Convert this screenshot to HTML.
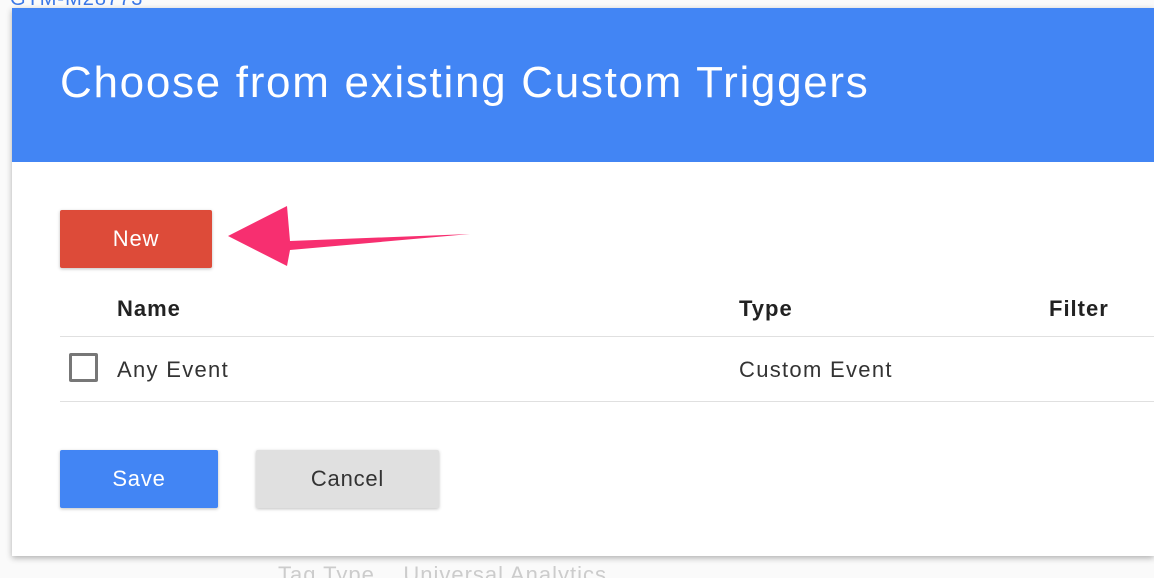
<!DOCTYPE html>
<html><head><style>
html,body{margin:0;width:1154px;height:578px;overflow:hidden}
body{background:#fafafa;font-family:"Liberation Sans",sans-serif;position:relative}
.top{position:absolute;left:10px;top:-12px;color:#3b78e7;font-size:20px;letter-spacing:1px}
.dlg{position:absolute;left:12px;top:8px;width:1142px;height:548px;background:#fff;box-shadow:0 2px 6px rgba(0,0,0,.3)}
.hdr{height:154px;background:#4285f4;color:#fff;font-size:44px;letter-spacing:1.7px;line-height:150px;padding-left:48px}
.btn{position:absolute;border-radius:2px;font-size:22px;letter-spacing:.8px;text-align:center;box-shadow:0 1px 3px rgba(0,0,0,.25)}
.th{position:absolute;font-weight:bold;font-size:22px;color:#222;letter-spacing:1px}
.td{position:absolute;font-size:22px;color:#333;letter-spacing:1.3px}
.line{position:absolute;left:48px;width:1094px;height:1px;background:#e0e0e0}
.bottom{position:absolute;top:562px;left:278px;font-size:22px;color:#ccc;letter-spacing:1px}
</style></head><body>
<div class="top">GTM-M28773</div>
<div class="bottom">Tag Type &nbsp;&nbsp; Universal Analytics</div>
<div class="dlg">
<div class="hdr">Choose from existing Custom Triggers</div>
<div class="btn" style="left:48px;top:202px;width:152px;height:58px;line-height:58px;background:#dd4b39;color:#fff">New</div>
<div class="th" style="left:105px;top:288px">Name</div>
<div class="th" style="left:727px;top:288px">Type</div>
<div class="th" style="left:1037px;top:288px">Filter</div>
<div class="line" style="top:328px"></div>
<div style="position:absolute;left:57px;top:345px;width:29px;height:29px;border:3px solid #777;box-sizing:border-box;border-radius:2px"></div>
<div class="td" style="left:105px;top:349px">Any Event</div>
<div class="td" style="left:727px;top:349px">Custom Event</div>
<div class="line" style="top:393px"></div>
<div class="btn" style="left:48px;top:442px;width:158px;height:58px;line-height:58px;background:#4285f4;color:#fff">Save</div>
<div class="btn" style="left:244px;top:442px;width:183px;height:58px;line-height:58px;background:#e0e0e0;color:#333">Cancel</div>
</div>
<svg style="position:absolute;left:0;top:0" width="1154" height="578">
<path d="M470 234 L290 241 L287 206 L228 236 L287 266 L290 250 Z" fill="#f72f70"/>
</svg>
</body></html>
